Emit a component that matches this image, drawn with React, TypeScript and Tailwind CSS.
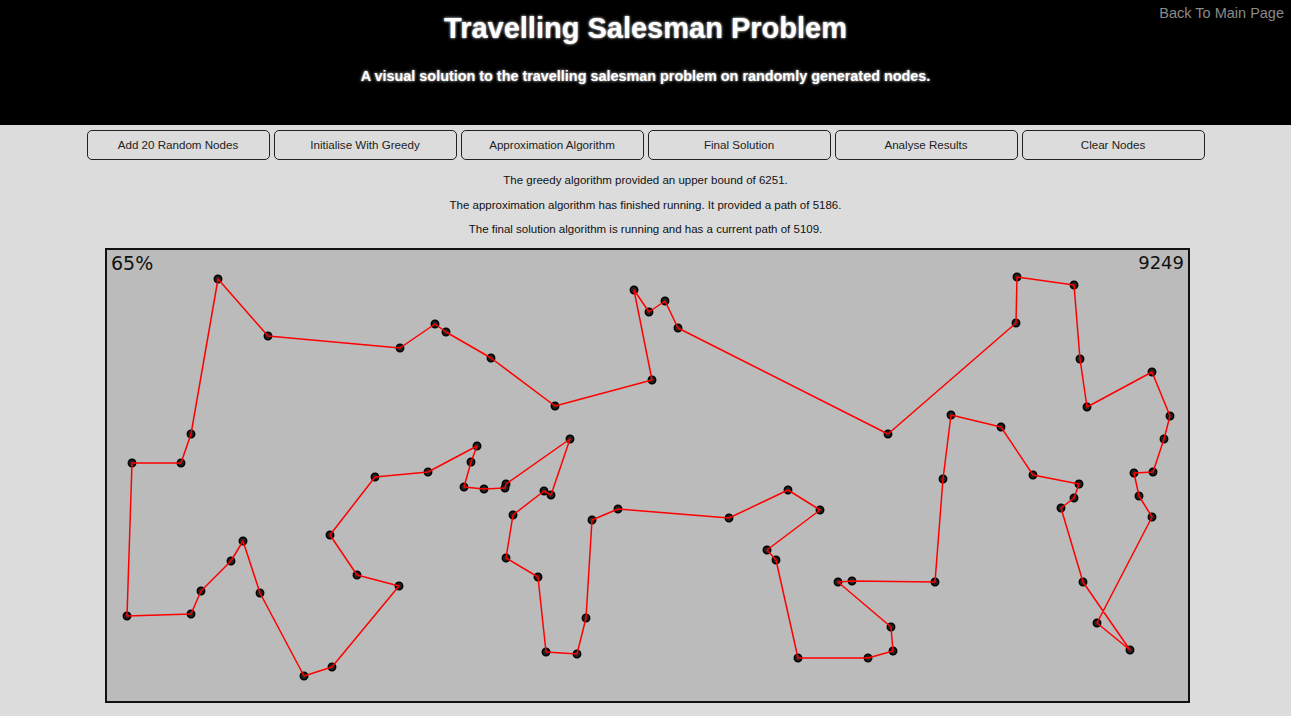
import React from "react";

const buttons = [
    "Add 20 Random Nodes",
    "Initialise With Greedy",
    "Approximation Algorithm",
    "Final Solution",
    "Analyse Results",
    "Clear Nodes",
];

// tour, in page pixels, in the order it is drawn
const tour: [number, number][] = [
    [218, 278], [268, 335], [400, 347], [435, 323], [446, 331], [491, 357], [555, 405], [652, 379],
    [634, 289], [649, 311], [665, 300], [678, 327], [888, 433], [1016, 322], [1017, 276], [1074, 284],
    [1080, 358], [1087, 406], [1152, 371], [1170, 415], [1164, 438], [1153, 471], [1134, 472], [1139, 495],
    [1152, 516], [1097, 622], [1130, 649], [1083, 581], [1061, 507], [1074, 497], [1079, 483], [1033, 474],
    [1001, 426], [951, 414], [943, 478], [935, 581], [852, 580], [838, 581], [891, 626], [893, 650],
    [868, 657], [798, 657], [776, 559], [767, 549], [820, 509], [788, 489], [729, 517], [618, 508],
    [592, 519], [586, 617], [577, 653], [546, 651], [538, 576], [506, 557], [513, 514], [544, 490],
    [551, 494], [570, 438], [506, 483], [505, 487], [484, 488], [464, 486], [471, 461], [477, 445],
    [428, 471], [375, 476], [330, 534], [357, 574], [399, 585], [332, 666], [304, 675], [260, 592],
    [243, 540], [231, 560], [201, 590], [191, 613], [127, 615], [132, 462], [181, 462], [191, 433],
];

function Board() {
    const pts = tour.map(([x, y]) => `${x},${y}`).join(" ");
    return (
        <div className="relative ml-[105px] w-[1085px] h-[455px] border-2 border-[#111] bg-[#bbbbbb]">
            <svg className="block" width="1081" height="451" viewBox="107 249 1081 451">
                {tour.map(([x, y], i) => (
                    <circle key={i} cx={x} cy={y} r="3.7" fill="#222" stroke="#000" strokeWidth="1.5"/>
                ))}
                <polygon points={pts} fill="none" stroke="#ff0000" strokeWidth="1.5" strokeLinejoin="round"/>
            </svg>
            <span className="absolute left-[4px] top-[2px] text-[19px] leading-[22px] text-[#111] font-['DejaVu_Sans',sans-serif]">
                65%
            </span>
            <span className="absolute right-[4px] top-[2px] text-[18px] leading-[22px] text-[#111] font-['DejaVu_Sans',sans-serif]">
                9249
            </span>
        </div>
    );
}

export default function App() {
    return (
        <div className="min-h-[716px] bg-[#dcdcdc] font-['Liberation_Sans',Arial,sans-serif] pb-4">
            <header className="relative h-[125px] bg-black flex flex-col items-center text-white font-bold">
                <h1 className="mt-[11px] text-[29px] leading-[34px] [text-shadow:0_0_3px_#ffffff]">
                    Travelling Salesman Problem
                </h1>
                <p className="mt-[22px] text-[14.4px] leading-[18px] [text-shadow:0_0_3px_#ffffff]">
                    A visual solution to the travelling salesman problem on randomly generated nodes.
                </p>
                <a href="#" className="absolute right-[7px] top-[4px] text-[14.5px] leading-[18px] font-normal text-[#8a8a8a]">
                    Back To Main Page
                </a>
            </header>

            <div className="mt-[5px] flex justify-center gap-[4px]">
                {buttons.map((b) => (
                    <button key={b}
                            className="w-[183px] h-[30px] rounded-[5px] border-[1.5px] border-[#222] bg-[#dcdcdc] text-[11.6px] text-[#222]">
                        {b}
                    </button>
                ))}
            </div>

            <div className="mt-[8px] text-center text-[11.5px] leading-[24.5px] text-[#111]">
                <p>The greedy algorithm provided an upper bound of 6251.</p>
                <p>The approximation algorithm has finished running. It provided a path of 5186.</p>
                <p>The final solution algorithm is running and has a current path of 5109.</p>
            </div>

            <div className="mt-[6px]">
                <Board/>
            </div>
        </div>
    );
}
